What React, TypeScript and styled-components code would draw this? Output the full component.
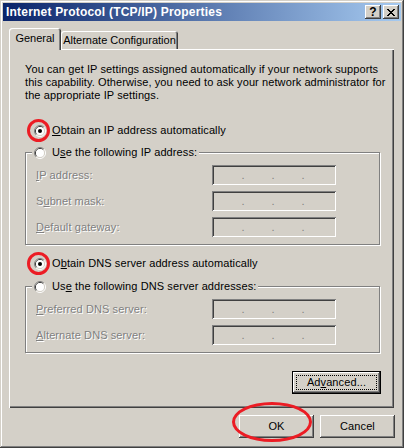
import React from 'react';
import styled, { createGlobalStyle } from 'styled-components';

const face = '#D4D0C8';
const light = '#FFFFFF';
const shadow = '#808080';
const dark = '#404040';
const mark = '#EC1C24';

const GlobalStyle = createGlobalStyle`
  html, body {
    margin: 0;
    padding: 0;
    background: ${face};
  }
`;

const Window = styled.div`
  box-sizing: border-box;
  width: 404px;
  height: 448px;
  padding: 3px;
  display: flex;
  flex-direction: column;
  background: ${face};
  box-shadow: inset -1px -1px ${dark}, inset 1px 1px ${face}, inset -2px -2px ${shadow}, inset 2px 2px ${light};
  font: 11px/13px 'Liberation Sans', Arial, sans-serif;
  letter-spacing: 0.1px;
  color: #000;
`;

const TitleBar = styled.div`
  display: flex;
  align-items: center;
  height: 18px;
  padding: 0 2px;
  background: linear-gradient(to right, #0a246a, #a6caf0);
`;

const Title = styled.div`
  flex: 1;
  padding-left: 1px;
  color: #fff;
  font-size: 12px;
  font-weight: bold;
  line-height: 18px;
  letter-spacing: 0.2px;
  white-space: nowrap;
`;

const CaptionButtons = styled.div`
  display: flex;
  gap: 2px;
`;

const CaptionButton = styled.div`
  box-sizing: border-box;
  width: 16px;
  height: 14px;
  display: flex;
  align-items: center;
  justify-content: center;
  background: ${face};
  box-shadow: inset -1px -1px ${dark}, inset 1px 1px ${light}, inset -2px -2px ${shadow};
  font: bold 12px/14px 'Liberation Sans', Arial, sans-serif;
`;

const Body = styled.div`
  display: flex;
  flex-direction: column;
  padding: 7px 7px 0 6px;
`;

const TabStrip = styled.div`
  display: flex;
  align-items: flex-end;
  height: 21px;
`;

const Tab = styled.div<{ $active?: boolean; $width: number }>`
  box-sizing: border-box;
  width: ${(p) => p.$width}px;
  height: ${(p) => (p.$active ? 22 : 18)}px;
  margin-bottom: ${(p) => (p.$active ? -1 : 0)}px;
  padding-top: ${(p) => (p.$active ? 4 : 3)}px;
  position: relative;
  z-index: ${(p) => (p.$active ? 1 : 0)};
  text-align: center;
  letter-spacing: 0;
  white-space: nowrap;
  background: ${face};
  border-radius: 3px 3px 0 0;
  box-shadow: inset 1px 1px ${light}, inset -1px 0 ${dark}, inset -2px 0 ${shadow};
`;

const Panel = styled.div`
  box-sizing: border-box;
  height: 359px;
  display: flex;
  flex-direction: column;
  padding: 14px 14px 0 16px;
  box-shadow: inset 1px 1px ${light}, inset -1px -1px ${dark}, inset -2px -2px ${shadow};
`;

const Intro = styled.p`
  margin: 0;
  white-space: nowrap;
`;

const Option = styled.div<{ $mt: number }>`
  display: flex;
  align-items: center;
  gap: 6px;
  height: 13px;
  margin: ${(p) => p.$mt}px 0 0 9px;
  white-space: nowrap;
`;

const Group = styled.div<{ $mt: number }>`
  display: flex;
  flex-direction: column;
  margin-top: ${(p) => p.$mt}px;
`;

const Legend = styled.div`
  position: relative;
  z-index: 1;
  align-self: flex-start;
  display: flex;
  align-items: center;
  gap: 6px;
  height: 13px;
  margin-left: 7px;
  padding: 0 2px;
  background: ${face};
  white-space: nowrap;
`;

const Frame = styled.div`
  margin-top: -7px;
  border: 1px solid ${shadow};
  box-shadow: 1px 1px 0 ${light}, inset 1px 1px 0 ${light};
  padding: 12px 0 7px 10px;
  display: grid;
  grid-template-columns: 176px 124px;
  row-gap: 6px;
  align-items: center;
`;

const Label = styled.span`
  color: ${shadow};
  text-shadow: 1px 1px 0 ${light};
  white-space: nowrap;
`;

const IpField = styled.div`
  box-sizing: border-box;
  width: 124px;
  height: 20px;
  display: flex;
  align-items: center;
  padding: 0 2px;
  background: ${face};
  color: ${shadow};
  box-shadow: inset 1px 1px ${shadow}, inset -1px -1px ${light}, inset 2px 2px ${dark}, inset -2px -2px ${face};
`;

const Octet = styled.span`
  flex: none;
  width: 28px;
`;

const Dot = styled.span`
  flex: none;
  width: 2px;
  display: flex;
  justify-content: center;
`;

const Button = styled.button<{ $focused?: boolean }>`
  position: relative;
  box-sizing: border-box;
  width: 75px;
  height: 23px;
  padding: 0;
  border: none;
  background: ${face};
  font: 11px/13px 'Liberation Sans', Arial, sans-serif;
  letter-spacing: 0.1px;
  color: #000;
  box-shadow: ${(p) =>
    p.$focused
      ? `inset 0 0 0 1px #000, inset -2px -2px ${dark}, inset 2px 2px ${light}, inset -3px -3px ${shadow}`
      : `inset -1px -1px ${dark}, inset 1px 1px ${light}, inset -2px -2px ${shadow}, inset 2px 2px ${face}`};

  &::after {
    content: '';
    display: ${(p) => (p.$focused ? 'block' : 'none')};
    position: absolute;
    inset: 4px;
    border: 1px dotted #000;
  }
`;

const AdvancedButton = styled(Button)`
  align-self: flex-end;
  width: 89px;
  margin: 18px -1px 0 0;
`;

const Footer = styled.div`
  display: flex;
  justify-content: flex-end;
  gap: 6px;
  margin: 7px -1px 0 0;
`;

const Key = styled.u`
  text-decoration: underline;
`;

const RadioBox = styled.span`
  position: relative;
  flex: none;
  width: 12px;
  height: 12px;

  svg {
    display: block;
  }
`;

const RedCircle = styled.span`
  position: absolute;
  left: -7px;
  top: -6px;
  box-sizing: border-box;
  width: 23px;
  height: 23px;
  border: 3px solid ${mark};
  border-radius: 50%;
  pointer-events: none;
`;

const RedEllipse = styled.span`
  position: absolute;
  left: -7px;
  top: -13px;
  box-sizing: border-box;
  width: 80px;
  height: 40px;
  border: 3px solid ${mark};
  border-radius: 50%;
  pointer-events: none;
`;

const Radio = ({ checked, circled }: { checked?: boolean; circled?: boolean }) => (
  <RadioBox>
    <svg width="12" height="12" viewBox="0 0 12 12">
      <path d="M2.11 9.89A5.5 5.5 0 0 1 9.89 2.11" fill="none" stroke={shadow} />
      <path d="M9.89 2.11A5.5 5.5 0 0 1 2.11 9.89" fill="none" stroke={light} />
      <path d="M2.82 9.18A4.5 4.5 0 0 1 9.18 2.82" fill="none" stroke={dark} />
      <path d="M9.18 2.82A4.5 4.5 0 0 1 2.82 9.18" fill="none" stroke={face} />
      <circle cx="6" cy="6" r="4" fill="#fff" />
      {checked && <circle cx="6" cy="6" r="2" fill="#000" />}
    </svg>
    {circled && <RedCircle />}
  </RadioBox>
);

const CloseGlyph = () => (
  <svg width="8" height="7" viewBox="0 0 8 7" shapeRendering="crispEdges">
    <path d="M0 0h2v1H0zM6 0h2v1H6zM1 1h2v1H1zM5 1h2v1H5zM2 2h4v1H2zM3 3h2v1H3zM2 4h4v1H2zM1 5h2v1H1zM5 5h2v1H5zM0 6h2v1H0zM6 6h2v1H6z" fill="#000" />
  </svg>
);

const Address = () => (
  <IpField>
    <Octet />
    <Dot>.</Dot>
    <Octet />
    <Dot>.</Dot>
    <Octet />
    <Dot>.</Dot>
  </IpField>
);

const App: React.FC = () => (
  <Window>
    <GlobalStyle />
    <TitleBar>
      <Title>Internet Protocol (TCP/IP) Properties</Title>
      <CaptionButtons>
        <CaptionButton>?</CaptionButton>
        <CaptionButton>
          <CloseGlyph />
        </CaptionButton>
      </CaptionButtons>
    </TitleBar>

    <Body>
      <TabStrip>
        <Tab $active $width={52}>General</Tab>
        <Tab $width={117}>Alternate Configuration</Tab>
      </TabStrip>

      <Panel>
        <Intro>
          You can get IP settings assigned automatically if your network supports
          <br />
          this capability. Otherwise, you need to ask your network administrator for
          <br />
          the appropriate IP settings.
        </Intro>

        <Option $mt={22}>
          <Radio checked circled />
          <span>
            <Key>O</Key>btain an IP address automatically
          </span>
        </Option>

        <Group $mt={9}>
          <Legend>
            <Radio />
            <span>
              U<Key>s</Key>e the following IP address:
            </span>
          </Legend>
          <Frame>
            <Label>
              <Key>I</Key>P address:
            </Label>
            <Address />
            <Label>
              S<Key>u</Key>bnet mask:
            </Label>
            <Address />
            <Label>
              <Key>D</Key>efault gateway:
            </Label>
            <Address />
          </Frame>
        </Group>

        <Option $mt={12}>
          <Radio checked circled />
          <span>
            O<Key>b</Key>tain DNS server address automatically
          </span>
        </Option>

        <Group $mt={10}>
          <Legend>
            <Radio />
            <span>
              Us<Key>e</Key> the following DNS server addresses:
            </span>
          </Legend>
          <Frame>
            <Label>
              <Key>P</Key>referred DNS server:
            </Label>
            <Address />
            <Label>
              <Key>A</Key>lternate DNS server:
            </Label>
            <Address />
          </Frame>
        </Group>

        <AdvancedButton $focused>
          Ad<Key>v</Key>anced...
        </AdvancedButton>
      </Panel>

      <Footer>
        <Button>
          OK
          <RedEllipse />
        </Button>
        <Button>Cancel</Button>
      </Footer>
    </Body>
  </Window>
);

export default App;
